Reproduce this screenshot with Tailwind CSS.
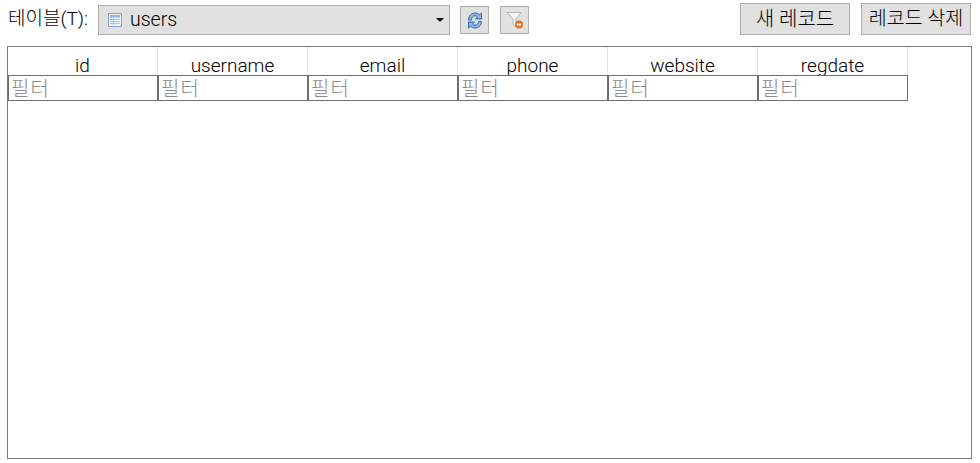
<!DOCTYPE html>
<html lang="ko">
<head>
  <meta charset="UTF-8" />
  <title>테이블</title>
  <script src="https://cdn.jsdelivr.net/npm/@tailwindcss/browser@4"></script>
</head>
<body class="w-[980px] h-[463px] overflow-hidden bg-white text-black font-light font-['Roboto','Noto_Sans_CJK_KR',sans-serif]">
  <div class="h-[46px] pl-2 pr-[9px] pt-1 flex items-start">
    <label class="mt-[3px] w-[90px] text-[19px] leading-6 whitespace-nowrap">테이블(T):</label>
    <div class="mt-px w-[352px] h-[30px] bg-[#e1e1e1] border border-[#adadad] flex items-center pl-2 pr-[5px]">
      <svg width="16" height="16" viewBox="0 0 16 16" class="shrink-0">
        <rect x="1.500" y="1.500" width="13" height="13" fill="#eef4fb" stroke="#7fa8d8" />
        <rect x="3" y="3" width="10" height="2.500" fill="#8fb6e2" />
        <path d="M3 7.500h10M3 9.500h10M3 11.500h10M6.500 6v7" stroke="#a9c4e4" fill="none" />
      </svg>
      <span class="ml-[7px] text-[19.500px] leading-6">users</span>
      <svg width="8" height="4" viewBox="0 0 8 4" class="ml-auto"><path d="M0 0h8L4 4z" fill="#000" /></svg>
    </div>
    <button class="ml-[10px] mt-[2px] w-[29px] h-[28px] bg-[#e1e1e1] border border-[#adadad] flex items-center justify-center">
      <svg width="16" height="17" viewBox="0 0 16 17">
        <path d="M1.500 8C1.500 3.800 4.500 1 8 1c2 0 3.500.8 4.500 1.800L14.500 1v6h-6l2-2C9.800 4.200 9 3.800 8 3.800 6 3.800 4.600 5.500 4.300 8z" fill="#8db6e4" stroke="#2a69b4" />
        <path d="M14.500 9.500C14.500 13.500 11.500 16 8 16c-2 0-3.500-.8-4.500-1.800L1.500 16v-6h6l-2 2c.7.800 1.500 1.200 2.500 1.200 2 0 3.400-1.500 3.700-3.700z" fill="#8db6e4" stroke="#2a69b4" />
      </svg>
    </button>
    <button class="ml-[11px] mt-[2px] w-[29px] h-[28px] bg-[#e1e1e1] border border-[#adadad] flex items-center justify-center">
      <svg width="18" height="18" viewBox="0 0 18 18">
        <path d="M1 1.500h14L10 8v7.500L7 13V8z" fill="#f6f6f6" stroke="#b4b4b4" />
        <circle cx="13" cy="13.500" r="4" fill="#e8701f" />
        <rect x="10.800" y="12.600" width="4.400" height="1.800" fill="#fff" />
      </svg>
    </button>
    <button class="ml-auto w-[110px] h-[32px] -mt-px bg-[#e1e1e1] border border-[#adadad] text-[20px]">새 레코드</button>
    <button class="ml-[11px] w-[110px] h-[32px] -mt-px bg-[#e1e1e1] border border-[#adadad] text-[19.500px] whitespace-nowrap">레코드 삭제</button>
  </div>
  <div class="ml-[7px] w-[965px] h-[413px] border border-[#7c7c7c]">
    <div class="grid grid-cols-[repeat(6,150px)] h-[28px] text-[19px] leading-[37px] text-center">
      <div class="border-r border-[#e4e4e4]">id</div>
      <div class="border-r border-[#e4e4e4]">username</div>
      <div class="border-r border-[#e4e4e4]">email</div>
      <div class="border-r border-[#e4e4e4]">phone</div>
      <div class="border-r border-[#e4e4e4]">website</div>
      <div class="border-r border-[#e4e4e4]">regdate</div>
    </div>
    <div class="grid grid-cols-[repeat(6,150px)] h-[26px] text-[20px] tracking-[1px] text-[#8a8a8a]">
      <div class="h-[26px] border border-[#6e6e6e] pl-[2px] pt-px leading-6 overflow-hidden">필터</div>
      <div class="h-[26px] border border-[#6e6e6e] pl-[2px] pt-px leading-6 overflow-hidden">필터</div>
      <div class="h-[26px] border border-[#6e6e6e] pl-[2px] pt-px leading-6 overflow-hidden">필터</div>
      <div class="h-[26px] border border-[#6e6e6e] pl-[2px] pt-px leading-6 overflow-hidden">필터</div>
      <div class="h-[26px] border border-[#6e6e6e] pl-[2px] pt-px leading-6 overflow-hidden">필터</div>
      <div class="h-[26px] border border-[#6e6e6e] pl-[2px] pt-px leading-6 overflow-hidden">필터</div>
    </div>
  </div>
</body>
</html>
